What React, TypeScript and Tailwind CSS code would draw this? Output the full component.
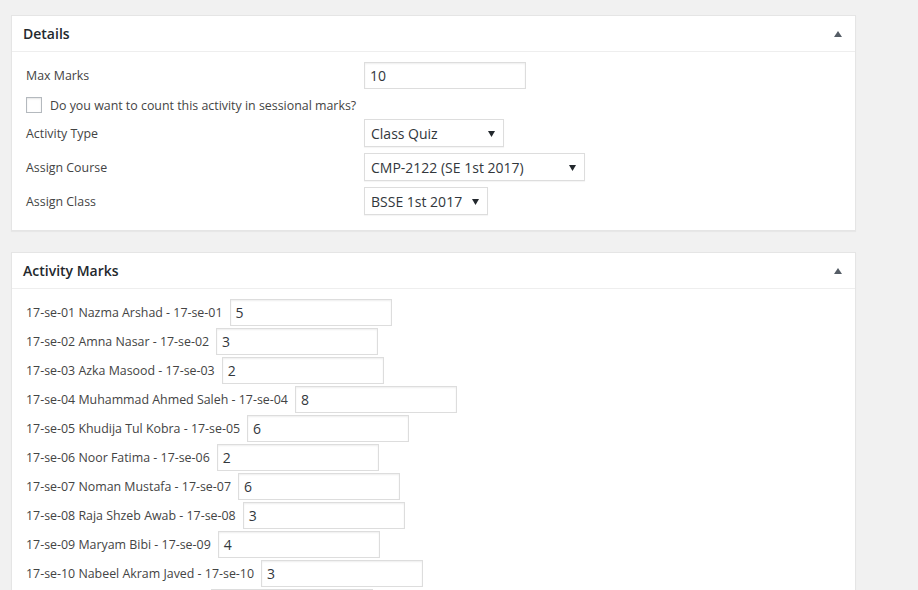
import React from 'react';

const students = [
  { roll: '17-se-01', name: 'Nazma Arshad', mark: '5' },
  { roll: '17-se-02', name: 'Amna Nasar', mark: '3' },
  { roll: '17-se-03', name: 'Azka Masood', mark: '2' },
  { roll: '17-se-04', name: 'Muhammad Ahmed Saleh', mark: '8' },
  { roll: '17-se-05', name: 'Khudija Tul Kobra', mark: '6' },
  { roll: '17-se-06', name: 'Noor Fatima', mark: '2' },
  { roll: '17-se-07', name: 'Noman Mustafa', mark: '6' },
  { roll: '17-se-08', name: 'Raja Shzeb Awab', mark: '3' },
  { roll: '17-se-09', name: 'Maryam Bibi', mark: '4' },
  { roll: '17-se-10', name: 'Nabeel Akram Javed', mark: '3' },
  { roll: '17-se-11', name: 'Hafsa Tariq', mark: '5' },
];

function Toggle() {
  return (
    <svg width="8" height="6" viewBox="0 0 8 6" className="block">
      <path d="M4 0 L8 6 L0 6 Z" fill="#555d66" />
    </svg>
  );
}

function Panel({ title, children }: { title: string; children: React.ReactNode }) {
  return (
    <div className="border border-[#e5e5e5] bg-white shadow-[0_1px_1px_rgba(0,0,0,0.04)]">
      <div className="flex h-[36px] items-center justify-between border-b border-[#eee] pl-[11px] pr-[13px]">
        <h2 className="text-[14px] font-semibold text-[#23282d]">{title}</h2>
        <Toggle />
      </div>
      {children}
    </div>
  );
}

function TextBox({ value }: { value: string }) {
  return (
    <div className="flex h-[27px] w-[162px] shrink-0 items-center border border-[#ddd] bg-white pl-[5px] text-[14px] text-[#32373c] shadow-[inset_0_1px_2px_rgba(0,0,0,0.07)]">
      {value}
    </div>
  );
}

function SelectBox({ value, width }: { value: string; width: string }) {
  return (
    <div
      className={`flex h-[28px] ${width} items-center justify-between border border-[#ddd] bg-white pl-[6px] pr-[8px] text-[14px] text-[#32373c] shadow-[0_1px_1px_rgba(0,0,0,0.04)]`}
    >
      <span>{value}</span>
      <svg width="7" height="7" viewBox="0 0 7 7" className="block">
        <path d="M0 1 L7 1 L3.5 7 Z" fill="#23282d" />
      </svg>
    </div>
  );
}

function FieldRow({ label, children }: { label: string; children: React.ReactNode }) {
  return (
    <div className="flex items-center">
      <span className="w-[338px] shrink-0 pt-[2px]">{label}</span>
      {children}
    </div>
  );
}

export default function App() {
  return (
    <div
      className="h-[590px] overflow-hidden bg-[#f1f1f1] pl-[11px] pt-[15px] text-[12.4px] text-[#444]"
      style={{ fontFamily: '"Open Sans", "Noto Sans", sans-serif' }}
    >
      <div className="w-[845px]">
        {/* Details */}
        <Panel title="Details">
          <div className="flex flex-col pb-[15px] pl-[14px] pt-[10px]">
            <FieldRow label="Max Marks">
              <TextBox value="10" />
            </FieldRow>
            <label className="mt-[8px] flex h-[16px] items-center gap-[8px]">
              <span className="h-[16px] w-[16px] border border-[#b4b9be] bg-white shadow-[inset_0_1px_2px_rgba(0,0,0,0.1)]" />
              <span className="pt-[2px]">Do you want to count this activity in sessional marks?</span>
            </label>
            <div className="mt-[6px]">
              <FieldRow label="Activity Type">
                <SelectBox value="Class Quiz" width="w-[140px]" />
              </FieldRow>
            </div>
            <div className="mt-[6px]">
              <FieldRow label="Assign Course">
                <SelectBox value="CMP-2122 (SE 1st 2017)" width="w-[221px]" />
              </FieldRow>
            </div>
            <div className="mt-[6px]">
              <FieldRow label="Assign Class">
                <SelectBox value="BSSE 1st 2017" width="w-[124px]" />
              </FieldRow>
            </div>
          </div>
        </Panel>

        {/* Activity Marks */}
        <div className="mt-[21px]">
          <Panel title="Activity Marks">
            <div className="flex flex-col gap-[2px] pb-[12px] pl-[14px] pt-[10px]">
              {students.map((s) => (
                <div key={s.roll} className="flex items-center">
                  <span className="mr-[7px] pt-[2px]">
                    {s.roll} {s.name} - {s.roll}
                  </span>
                  <TextBox value={s.mark} />
                </div>
              ))}
            </div>
          </Panel>
        </div>
      </div>
    </div>
  );
}
